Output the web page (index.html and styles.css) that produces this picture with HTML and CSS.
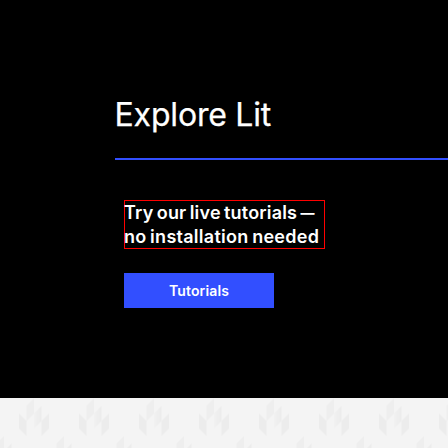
FILE: index.html
```html
<!DOCTYPE html>
<html lang="en">
<head>
<meta charset="utf-8">
<title>Explore Lit</title>
<link rel="stylesheet" href="styles.css">
</head>
<body>
<section class="explore">
  <h2 class="title">Explore Lit</h2>
  <div class="content">
    <h3 class="lead"><span class="line1">Try our live tutorials <span class="dash">—</span></span><br><span class="line2">no installation needed</span></h3>
    <a class="button">Tutorials</a>
  </div>
</section>
<footer class="pattern">
  <svg width="448" height="50" aria-hidden="true">
    <defs>
      <linearGradient id="fade"><stop offset="0" stop-color="#f1f1f1"/><stop offset="1" stop-color="#ebebeb"/></linearGradient>
      <g id="flame">
        <path fill="#ececec" d="M0 15l7.5 7.5v15L0 30z"/>
        <path fill="#eeeeee" d="M7.5 7.5L15 0v15l-7.5 7.5z"/>
        <path fill="url(#fade)" d="M15 15l7.5-7.5v15L15 30z"/>
        <path fill="#ececec" d="M22.5 22.5L30 15v15l-7.5 7.5z"/>
      </g>
      <pattern id="flames" x="-11" y=".5" width="60" height="75" patternUnits="userSpaceOnUse">
        <use href="#flame" x="30"/>
        <use href="#flame" y="37.5"/>
      </pattern>
    </defs>
    <rect width="448" height="50" fill="url(#flames)"/>
  </svg>
</footer>
</body>
</html>
```
FILE: styles.css
```css
body {
  margin: 0;
  width: 448px;
  height: 448px;
  overflow: hidden;
  background: #f4f4f4;
  color: #fff;
  font-family: Inter, "Liberation Sans", sans-serif;
}
.explore {
  box-sizing: border-box;
  height: 398px;
  padding: 92px 0 0 115px;
  background: #000;
}
.title {
  box-sizing: border-box;
  height: 68px;
  margin: 0 0 40px;
  border-bottom: 2px solid #324fff;
  font-size: 32px;
  font-weight: 400;
  line-height: 45px;
  letter-spacing: -0.15px;
  word-spacing: -0.5px;
  text-indent: -0.5px;
  -webkit-text-stroke: 0.25px #fff;
}
.content {
  padding-left: 9px;
}
.lead {
  box-sizing: border-box;
  width: 201px;
  height: 49px;
  margin: 0 0 24px;
  border: 1px solid #f00;
  font-size: 18px;
  font-weight: 600;
  line-height: 24px;
  white-space: nowrap;
}
.line1 {
  margin-left: -1px;
  letter-spacing: 0.18px;
  word-spacing: -1.4px;
}
.dash {
  font-size: 14px;
  font-weight: 800;
  line-height: 1;
  vertical-align: 1px;
}
.line2 {
  margin-left: -1px;
  letter-spacing: 0.27px;
  word-spacing: -1.2px;
}
.button {
  display: block;
  width: 150px;
  height: 35px;
  background: #324fff;
  font-size: 14px;
  font-weight: 600;
  line-height: 35px;
  text-align: center;
  letter-spacing: 0.15px;
}
.pattern {
  height: 50px;
}
.pattern svg {
  display: block;
}
```
